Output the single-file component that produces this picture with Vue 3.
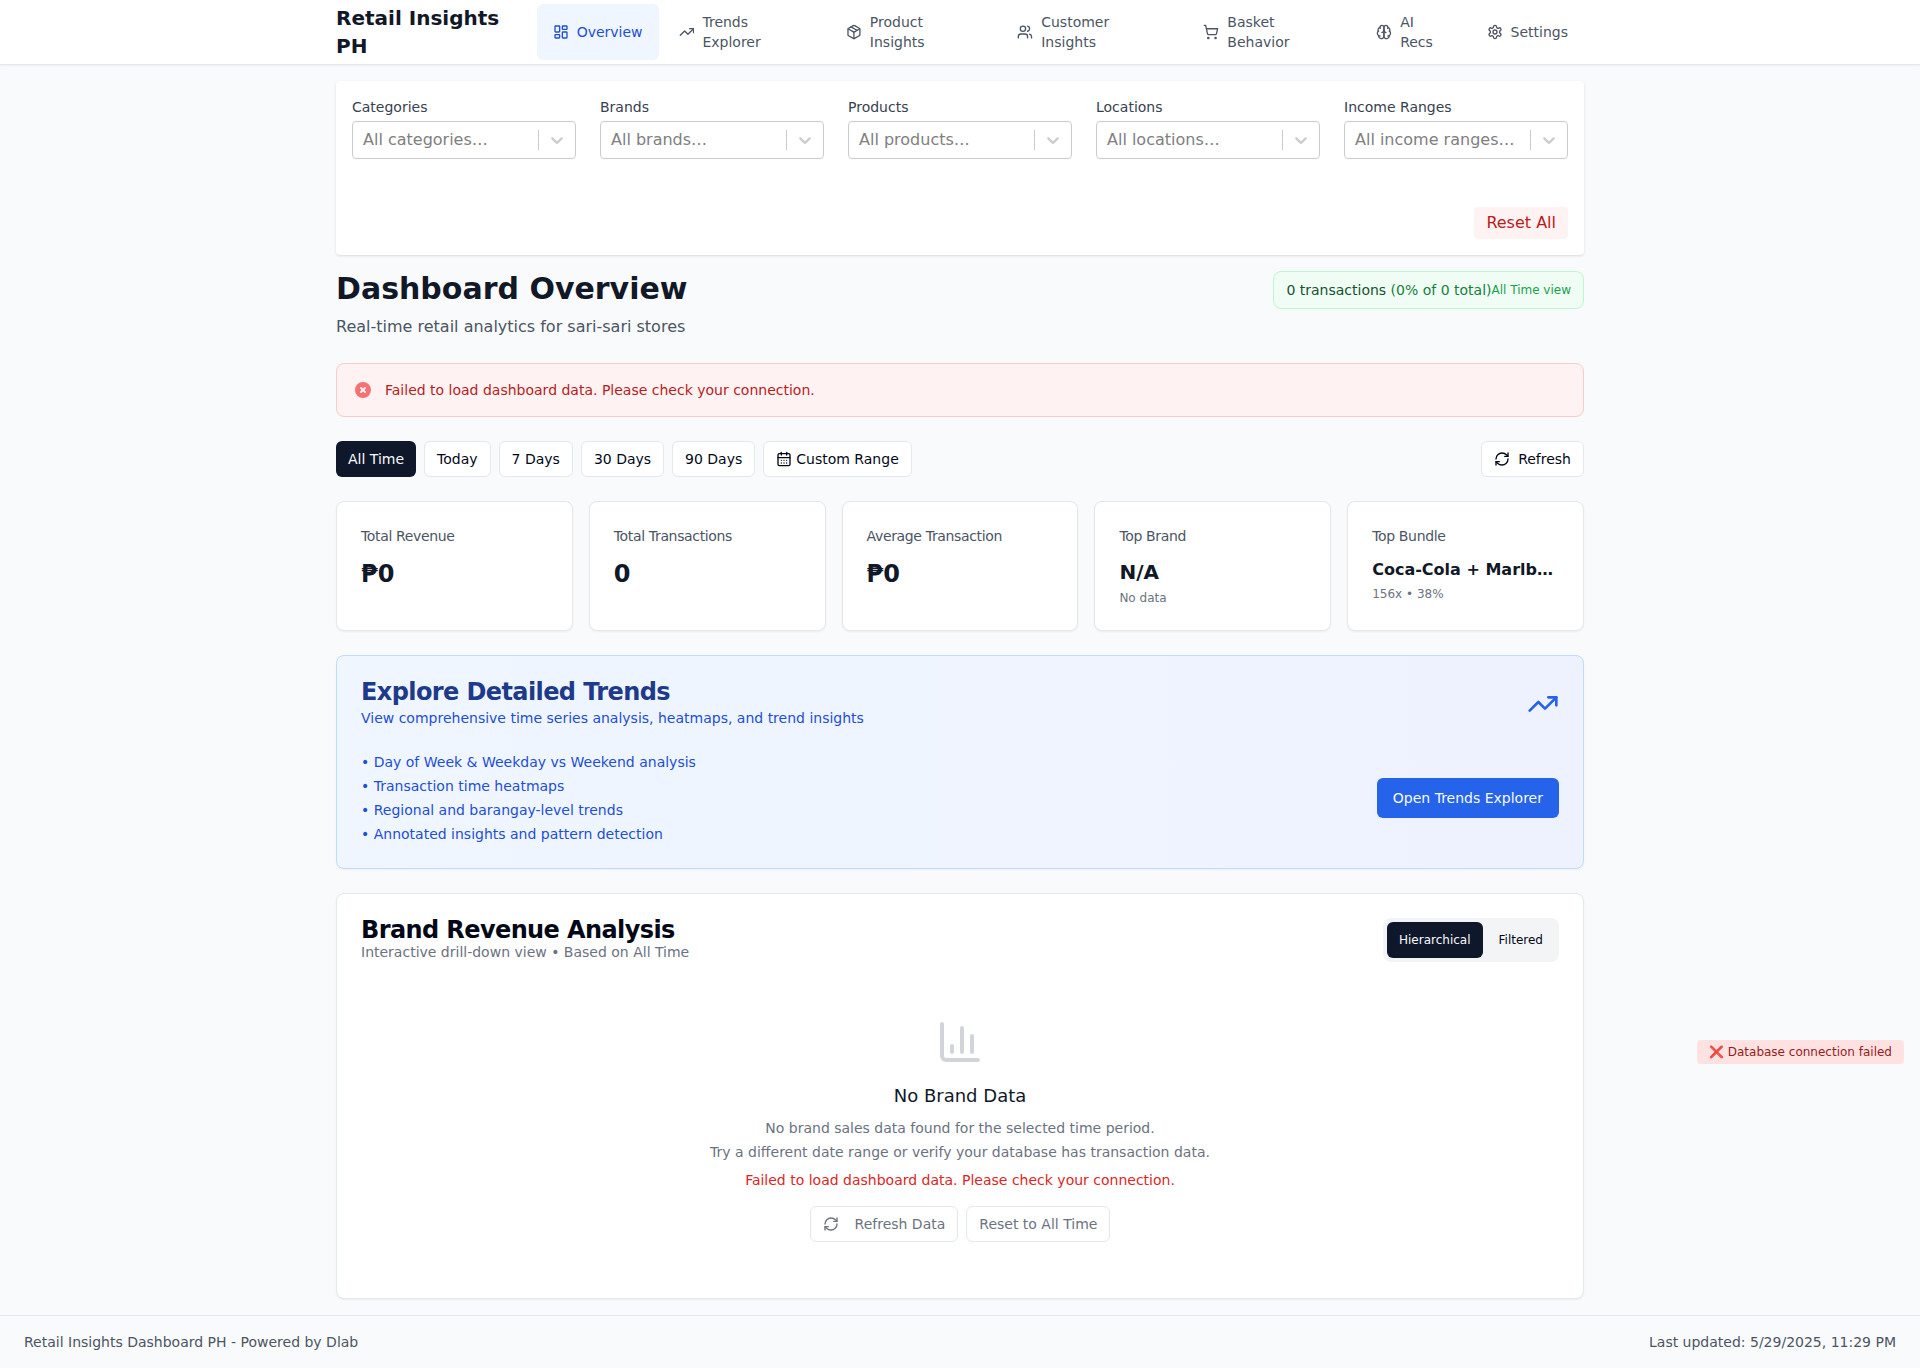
<script setup>
const icons = {
  dashboard:
    '<rect width="7" height="9" x="3" y="3" rx="1"/><rect width="7" height="5" x="14" y="3" rx="1"/><rect width="7" height="9" x="14" y="12" rx="1"/><rect width="7" height="5" x="3" y="16" rx="1"/>',
  trend: '<polyline points="22 7 13.5 15.5 8.5 10.5 2 17"/><polyline points="16 7 22 7 22 13"/>',
  package:
    '<path d="M11 21.73a2 2 0 0 0 2 0l7-4A2 2 0 0 0 21 16V8a2 2 0 0 0-1-1.73l-7-4a2 2 0 0 0-2 0l-7 4A2 2 0 0 0 3 8v8a2 2 0 0 0 1 1.73z"/><path d="M12 22V12"/><path d="m3.3 7 7.703 4.734a2 2 0 0 0 1.994 0L20.7 7"/><path d="m7.5 4.27 9 5.15"/>',
  users:
    '<path d="M16 21v-2a4 4 0 0 0-4-4H6a4 4 0 0 0-4 4v2"/><circle cx="9" cy="7" r="4"/><path d="M22 21v-2a4 4 0 0 0-3-3.87"/><path d="M16 3.13a4 4 0 0 1 0 7.75"/>',
  cart:
    '<circle cx="8" cy="21" r="1"/><circle cx="19" cy="21" r="1"/><path d="M2.05 2.05h2l2.66 12.42a2 2 0 0 0 2 1.58h9.78a2 2 0 0 0 1.95-1.57l1.65-7.43H5.12"/>',
  brain:
    '<path d="M12 5a3 3 0 1 0-5.997.125 4 4 0 0 0-2.526 5.77 4 4 0 0 0 .556 6.588A4 4 0 1 0 12 18Z"/><path d="M12 5a3 3 0 1 1 5.997.125 4 4 0 0 1 2.526 5.77 4 4 0 0 1-.556 6.588A4 4 0 1 1 12 18Z"/><path d="M15 13a4.5 4.5 0 0 1-3-4 4.5 4.5 0 0 1-3 4"/><path d="M17.599 6.5a3 3 0 0 0 .399-1.375"/><path d="M6.003 5.125A3 3 0 0 0 6.401 6.5"/><path d="M3.477 10.896a4 4 0 0 1 .585-.396"/><path d="M19.938 10.5a4 4 0 0 1 .585.396"/><path d="M6 18a4 4 0 0 1-1.967-.516"/><path d="M19.967 17.484A4 4 0 0 1 18 18"/>',
  settings:
    '<path d="M12.22 2h-.44a2 2 0 0 0-2 2v.18a2 2 0 0 1-1 1.73l-.43.25a2 2 0 0 1-2 0l-.15-.08a2 2 0 0 0-2.73.73l-.22.38a2 2 0 0 0 .73 2.73l.15.1a2 2 0 0 1 1 1.72v.51a2 2 0 0 1-1 1.74l-.15.09a2 2 0 0 0-.73 2.73l.22.38a2 2 0 0 0 2.73.73l.15-.08a2 2 0 0 1 2 0l.43.25a2 2 0 0 1 1 1.73V20a2 2 0 0 0 2 2h.44a2 2 0 0 0 2-2v-.18a2 2 0 0 1 1-1.73l.43-.25a2 2 0 0 1 2 0l.15.08a2 2 0 0 0 2.73-.73l.22-.39a2 2 0 0 0-.73-2.73l-.15-.08a2 2 0 0 1-1-1.74v-.5a2 2 0 0 1 1-1.74l.15-.09a2 2 0 0 0 .73-2.73l-.22-.38a2 2 0 0 0-2.73-.73l-.15.08a2 2 0 0 1-2 0l-.43-.25a2 2 0 0 1-1-1.73V4a2 2 0 0 0-2-2z"/><circle cx="12" cy="12" r="3"/>',
  calendar:
    '<path d="M8 2v4"/><path d="M16 2v4"/><rect width="18" height="18" x="3" y="4" rx="2"/><path d="M3 10h18"/><path d="M8 14h.01"/><path d="M12 14h.01"/><path d="M16 14h.01"/><path d="M8 18h.01"/><path d="M12 18h.01"/><path d="M16 18h.01"/>',
  refresh:
    '<path d="M3 12a9 9 0 0 1 9-9 9.75 9.75 0 0 1 6.74 2.74L21 8"/><path d="M21 3v5h-5"/><path d="M21 12a9 9 0 0 1-9 9 9.75 9.75 0 0 1-6.74-2.74L3 16"/><path d="M8 16H3v5"/>',
  chart: '<path d="M3 3v16a2 2 0 0 0 2 2h16"/><path d="M18 17V9"/><path d="M13 17V5"/><path d="M8 17v-3"/>',
}

const nav = [
  { label: 'Overview', icon: 'dashboard', active: true },
  { label: 'Trends Explorer', icon: 'trend' },
  { label: 'Product Insights', icon: 'package' },
  { label: 'Customer Insights', icon: 'users' },
  { label: 'Basket Behavior', icon: 'cart' },
  { label: 'AI Recs', icon: 'brain' },
  { label: 'Settings', icon: 'settings' },
]

const filters = [
  { label: 'Categories', placeholder: 'All categories…' },
  { label: 'Brands', placeholder: 'All brands…' },
  { label: 'Products', placeholder: 'All products…' },
  { label: 'Locations', placeholder: 'All locations…' },
  { label: 'Income Ranges', placeholder: 'All income ranges…' },
]

const ranges = ['All Time', 'Today', '7 Days', '30 Days', '90 Days']

const stats = [
  { label: 'Total Revenue', value: '₱0', size: 'lg' },
  { label: 'Total Transactions', value: '0', size: 'lg' },
  { label: 'Average Transaction', value: '₱0', size: 'lg' },
  { label: 'Top Brand', value: 'N/A', size: 'md', note: 'No data' },
  { label: 'Top Bundle', value: 'Coca-Cola + Marlb…', size: 'sm', note: '156x • 38%' },
]

const features = [
  'Day of Week & Weekday vs Weekend analysis',
  'Transaction time heatmaps',
  'Regional and barangay-level trends',
  'Annotated insights and pattern detection',
]
</script>

<template>
  <div class="page">
    <header class="topbar">
      <div class="topbar-inner">
        <div class="logo">Retail Insights PH</div>
        <nav class="nav">
          <a v-for="item in nav" :key="item.label" class="nav-item" :class="{ active: item.active }">
            <svg class="icon" viewBox="0 0 24 24" v-html="icons[item.icon]"></svg>
            <span>{{ item.label }}</span>
          </a>
        </nav>
      </div>
    </header>

    <main class="main">
      <section class="filters">
        <div class="filter-grid">
          <div v-for="f in filters" :key="f.label">
            <label class="filter-label">{{ f.label }}</label>
            <div class="select">
              <span class="placeholder">{{ f.placeholder }}</span>
              <span class="separator"></span>
              <span class="indicator">
                <svg width="20" height="20" viewBox="0 0 20 20">
                  <path d="M4.516 7.548c0.436-0.446 1.043-0.481 1.576 0l3.908 3.747 3.908-3.747c0.533-0.481 1.141-0.446 1.574 0 0.436 0.445 0.408 1.197 0 1.615-0.406 0.418-4.695 4.502-4.695 4.502-0.217 0.223-0.502 0.335-0.787 0.335s-0.57-0.112-0.789-0.335c0 0-4.287-4.084-4.695-4.502s-0.436-1.17 0-1.615z" />
                </svg>
              </span>
            </div>
          </div>
        </div>
        <div class="filter-actions"><button class="reset">Reset All</button></div>
      </section>

      <section class="heading">
        <div>
          <h1>Dashboard Overview</h1>
          <p>Real-time retail analytics for sari-sari stores</p>
        </div>
        <div class="badge">
          <div class="badge-count">0 transactions <span>(0% of 0 total)</span></div>
          <div class="badge-view">All Time view</div>
        </div>
      </section>

      <section class="alert">
        <svg width="20" height="20" viewBox="0 0 20 20">
          <path fill-rule="evenodd" clip-rule="evenodd" d="M10 18a8 8 0 100-16 8 8 0 000 16zM8.707 7.293a1 1 0 00-1.414 1.414L8.586 10l-1.293 1.293a1 1 0 101.414 1.414L10 11.414l1.293 1.293a1 1 0 001.414-1.414L11.414 10l1.293-1.293a1 1 0 00-1.414-1.414L10 8.586 8.707 7.293z" />
        </svg>
        <p>Failed to load dashboard data. Please check your connection.</p>
      </section>

      <section class="range-row">
        <div class="ranges">
          <button v-for="(r, i) in ranges" :key="r" class="btn" :class="{ primary: i === 0 }">{{ r }}</button>
          <button class="btn tight">
            <svg class="icon" viewBox="0 0 24 24" v-html="icons.calendar"></svg>Custom Range
          </button>
        </div>
        <button class="btn">
          <svg class="icon" viewBox="0 0 24 24" v-html="icons.refresh"></svg>Refresh
        </button>
      </section>

      <section class="stats">
        <article v-for="s in stats" :key="s.label" class="stat">
          <h3>{{ s.label }}</h3>
          <div class="value" :class="s.size">{{ s.value }}</div>
          <p v-if="s.note">{{ s.note }}</p>
        </article>
      </section>

      <section class="explore">
        <div class="explore-head">
          <div>
            <h2>Explore Detailed Trends</h2>
            <p>View comprehensive time series analysis, heatmaps, and trend insights</p>
          </div>
          <svg class="icon trend-icon" viewBox="0 0 24 24" v-html="icons.trend"></svg>
        </div>
        <div class="explore-body">
          <div class="features">
            <p v-for="f in features" :key="f">• {{ f }}</p>
          </div>
          <button class="open">Open Trends Explorer</button>
        </div>
      </section>

      <section class="brand">
        <div class="brand-head">
          <div>
            <h2>Brand Revenue Analysis</h2>
            <p>Interactive drill-down view • Based on All Time</p>
          </div>
          <div class="toggle">
            <button class="on">Hierarchical</button>
            <button>Filtered</button>
          </div>
        </div>
        <div class="empty">
          <svg class="icon chart-icon" viewBox="0 0 24 24" v-html="icons.chart"></svg>
          <h3>No Brand Data</h3>
          <p>No brand sales data found for the selected time period.</p>
          <p>Try a different date range or verify your database has transaction data.</p>
          <p class="error">Failed to load dashboard data. Please check your connection.</p>
          <div class="empty-actions">
            <button class="btn wide">
              <svg class="icon" viewBox="0 0 24 24" v-html="icons.refresh"></svg>Refresh Data
            </button>
            <button class="btn">Reset to All Time</button>
          </div>
        </div>
      </section>
    </main>

    <footer class="footer">
      <span>Retail Insights Dashboard PH - Powered by Dlab</span>
      <span>Last updated: 5/29/2025, 11:29 PM</span>
    </footer>

    <div class="toast">❌ Database connection failed</div>
  </div>
</template>

<style>
body {
  background: #f9fafb;
}
</style>

<style scoped>
* {
  box-sizing: border-box;
  margin: 0;
}
.page {
  position: relative;
  min-height: 1368px;
  display: flex;
  flex-direction: column;
  background: #f9fafb;
  color: #020817;
  font-family: "DejaVu Sans", sans-serif;
  font-size: 16px;
  line-height: 24px;
}
button {
  font: inherit;
  color: inherit;
  border: 0;
  background: none;
  white-space: nowrap;
}
.icon {
  width: 16px;
  height: 16px;
  fill: none;
  stroke: currentColor;
  stroke-width: 2;
  stroke-linecap: round;
  stroke-linejoin: round;
}

.topbar {
  background: #fff;
  border-bottom: 1px solid #e2e8f0;
  box-shadow: 0 1px 2px rgba(0, 0, 0, 0.05);
}
.topbar-inner {
  width: 1248px;
  height: 64px;
  margin: 0 auto;
  display: flex;
  align-items: center;
  justify-content: space-between;
}
.logo {
  font-size: 20px;
  line-height: 28px;
  font-weight: 700;
  color: #111827;
}
.nav {
  display: flex;
  gap: 4px;
}
.nav-item {
  display: flex;
  align-items: center;
  gap: 8px;
  padding: 8px 16px;
  border-radius: 6px;
  font-size: 14px;
  line-height: 20px;
  color: #4b5563;
}
.nav-item.active {
  background: #eff6ff;
  color: #1d4ed8;
}

.main {
  width: 1248px;
  margin: 0 auto;
  padding: 16px 0;
  flex: 1;
}
.filters {
  padding: 16px;
  background: #fff;
  border-radius: 4px;
  box-shadow: 0 1px 3px rgba(0, 0, 0, 0.1), 0 1px 2px -1px rgba(0, 0, 0, 0.1);
}
.filter-grid {
  display: grid;
  grid-template-columns: repeat(5, 1fr);
  gap: 24px;
}
.filter-label {
  display: block;
  margin-bottom: 4px;
  font-size: 14px;
  line-height: 20px;
  color: #374151;
}
.select {
  display: flex;
  height: 38px;
  border: 1px solid #ccc;
  border-radius: 4px;
  background: #fff;
}
.placeholder {
  flex: 1;
  padding: 6px 0 6px 10px;
  color: #808080;
  white-space: nowrap;
}
.separator {
  width: 1px;
  margin: 8px 0;
  background: #ccc;
}
.indicator {
  display: flex;
  padding: 8px;
}
.indicator svg {
  fill: #ccc;
}
.filter-actions {
  display: flex;
  justify-content: flex-end;
  margin-top: 48px;
}
.reset {
  padding: 4px 12px;
  border-radius: 4px;
  background: #fef2f2;
  color: #b91c1c;
}

.heading {
  display: flex;
  align-items: flex-start;
  justify-content: space-between;
  margin-top: 16px;
}
.heading h1 {
  font-size: 30px;
  line-height: 36px;
  font-weight: 700;
  color: #111827;
}
.heading p {
  margin-top: 8px;
  color: #4b5563;
}
.badge {
  display: flex;
  align-items: center;
  padding: 8px 12px;
  border: 1px solid #bbf7d0;
  border-radius: 8px;
  background: #f0fdf4;
  font-size: 14px;
  line-height: 20px;
}
.badge-count {
  color: #14532d;
}
.badge-count span {
  color: #15803d;
}
.badge-view {
  font-size: 12px;
  line-height: 16px;
  color: #16a34a;
}

.alert {
  display: flex;
  gap: 12px;
  margin-top: 24px;
  padding: 16px;
  border: 1px solid #fecaca;
  border-radius: 8px;
  background: #fef2f2;
  font-size: 14px;
  line-height: 20px;
  color: #b91c1c;
}
.alert svg {
  fill: #f87171;
}

.range-row {
  display: flex;
  justify-content: space-between;
  margin-top: 24px;
}
.ranges {
  display: flex;
  gap: 8px;
}
.btn {
  display: flex;
  align-items: center;
  gap: 8px;
  height: 36px;
  padding: 0 12px;
  border: 1px solid #e2e8f0;
  border-radius: 6px;
  background: #fff;
  font-size: 14px;
  line-height: 20px;
}
.btn.primary {
  border: 0;
  background: #0f172a;
  color: #f8fafc;
}
.btn.tight {
  gap: 4px;
}
.btn.wide {
  gap: 16px;
}

.stats {
  display: grid;
  grid-template-columns: repeat(5, minmax(0, 1fr));
  gap: 16px;
  margin-top: 24px;
}
.stat {
  padding: 24px;
  border: 1px solid #e5e7eb;
  border-radius: 8px;
  background: #fff;
  box-shadow: 0 1px 2px rgba(0, 0, 0, 0.05);
}
.stat h3 {
  margin-bottom: 12px;
  font-size: 14px;
  line-height: 20px;
  font-weight: 400;
  letter-spacing: -0.025em;
  color: #4b5563;
}
.value {
  white-space: nowrap;
  font-weight: 700;
  color: #111827;
}
.value.lg {
  font-size: 24px;
  line-height: 32px;
}
.value.md {
  font-size: 20px;
  line-height: 28px;
}
.value.sm {
  font-size: 16px;
  line-height: 24px;
}
.stat p {
  margin-top: 4px;
  font-size: 12px;
  line-height: 16px;
  color: #6b7280;
}

.explore {
  margin-top: 24px;
  padding: 24px;
  border: 1px solid #bfdbfe;
  border-radius: 8px;
  background: linear-gradient(to right, #eff6ff, #eef2ff);
  box-shadow: 0 1px 2px rgba(0, 0, 0, 0.05);
  font-size: 14px;
  line-height: 20px;
  color: #1d4ed8;
}
.explore-head,
.explore-body {
  display: flex;
  align-items: center;
  justify-content: space-between;
}
.explore-body {
  margin-top: 24px;
}
h2 {
  font-size: 24px;
  line-height: 24px;
  font-weight: 700;
  letter-spacing: -0.025em;
}
.explore h2 {
  margin-bottom: 4px;
  color: #1e3a8a;
}
.trend-icon {
  width: 32px;
  height: 32px;
  color: #2563eb;
}
.features {
  display: flex;
  flex-direction: column;
  gap: 4px;
}
.open {
  height: 40px;
  padding: 0 16px;
  border-radius: 6px;
  background: #2563eb;
  color: #f8fafc;
}

.brand {
  margin-top: 24px;
  padding: 24px;
  border: 1px solid #e2e8f0;
  border-radius: 8px;
  background: #fff;
  box-shadow: 0 1px 2px rgba(0, 0, 0, 0.05);
  font-size: 14px;
  line-height: 20px;
}
.brand-head {
  display: flex;
  align-items: center;
  justify-content: space-between;
  color: #020817;
}
.brand-head p {
  color: #6b7280;
}
.toggle {
  display: flex;
  gap: 4px;
  padding: 4px;
  border-radius: 8px;
  background: #f3f4f6;
}
.toggle button {
  height: 36px;
  padding: 0 12px;
  border-radius: 6px;
  font-size: 12px;
  line-height: 16px;
}
.toggle .on {
  background: #0f172a;
  color: #f8fafc;
}
.empty {
  display: flex;
  flex-direction: column;
  align-items: center;
  justify-content: center;
  height: 288px;
  margin-top: 24px;
  color: #6b7280;
}
.chart-icon {
  width: 48px;
  height: 48px;
  color: #d1d5db;
}
.empty h3 {
  margin: 16px 0 8px;
  font-size: 18px;
  line-height: 28px;
  font-weight: 400;
  color: #111827;
}
.empty p + p {
  margin-top: 4px;
}
.empty p.error {
  margin-top: 8px;
  color: #dc2626;
}
.empty-actions {
  display: flex;
  gap: 8px;
  margin-top: 16px;
}

.footer {
  display: flex;
  justify-content: space-between;
  padding: 16px 24px;
  border-top: 1px solid #e2e8f0;
  font-size: 14px;
  line-height: 20px;
  color: #4b5563;
}
.toast {
  position: absolute;
  top: 1040px;
  right: 16px;
  padding: 4px 12px;
  border-radius: 4px;
  background: #fee2e2;
  font-size: 12px;
  line-height: 16px;
  color: #991b1b;
}
</style>
